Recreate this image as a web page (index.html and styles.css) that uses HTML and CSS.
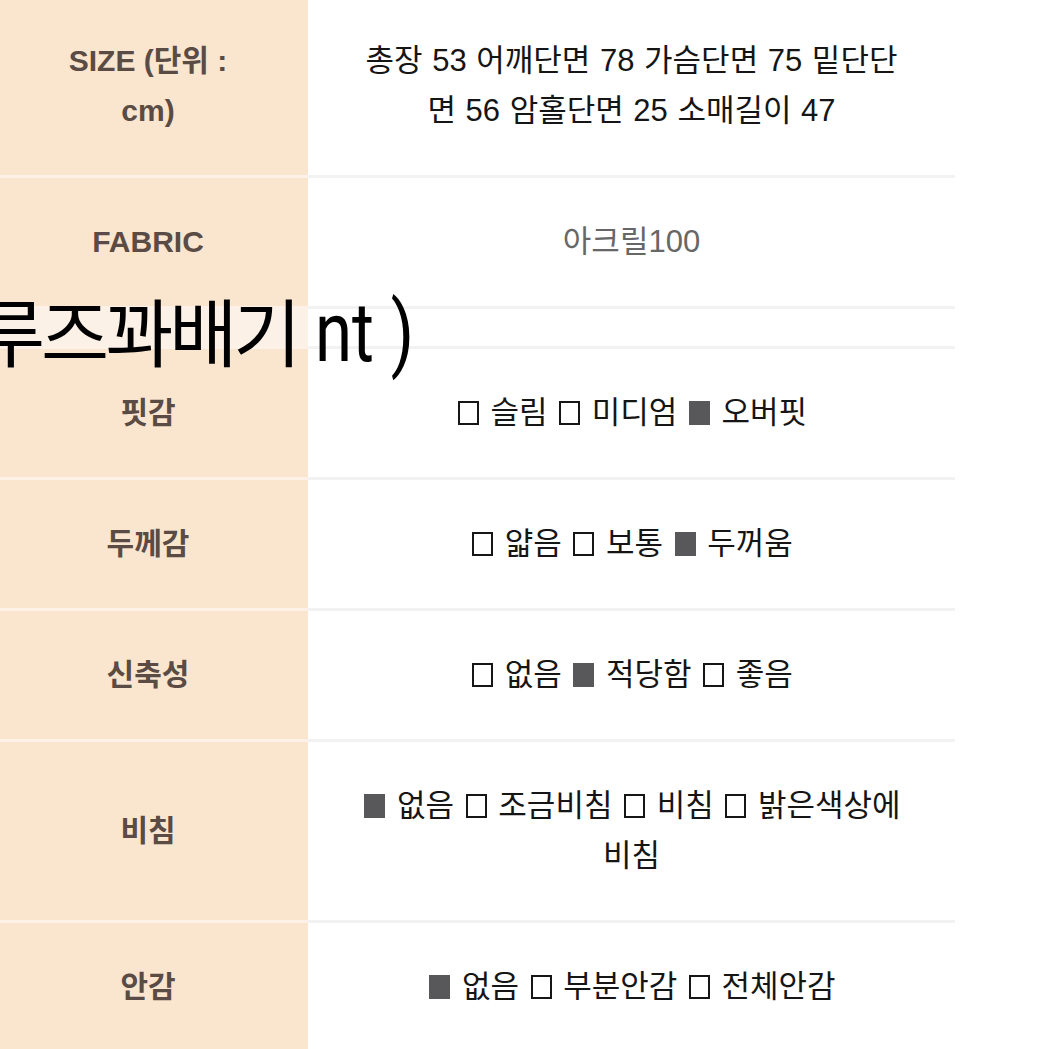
FILE: index.html
```html
<!DOCTYPE html>
<html lang="ko">
<head>
<meta charset="utf-8">
<title>상품 정보</title>
<link rel="stylesheet" href="styles.css">
</head>
<body>
<div class="spec">
  <div class="row">
    <div class="label"><p class="txt">SIZE (단위 : cm)</p></div>
    <div class="value"><p class="txt">총장 53 어깨단면 78 가슴단면 75 밑단단면 56 암홀단면 25 소매길이 47</p></div>
  </div>
  <div class="row">
    <div class="label"><p class="txt">FABRIC</p></div>
    <div class="value muted"><p class="txt">아크릴100</p></div>
  </div>
  <div class="row band">
    <div class="label band-cell"></div>
    <div class="value band-cell"></div>
    <div class="caption"><span class="cap-ko">루즈꽈배기</span> <span class="cap-en">nt )</span></div>
  </div>
  <div class="row">
    <div class="label"><p class="txt">핏감</p></div>
    <div class="value"><p class="txt"><span class="box"></span> 슬림 <span class="box"></span> 미디엄 <span class="box on"></span> 오버핏</p></div>
  </div>
  <div class="row">
    <div class="label"><p class="txt">두께감</p></div>
    <div class="value"><p class="txt"><span class="box"></span> 얇음 <span class="box"></span> 보통 <span class="box on"></span> 두꺼움</p></div>
  </div>
  <div class="row">
    <div class="label"><p class="txt">신축성</p></div>
    <div class="value"><p class="txt"><span class="box"></span> 없음 <span class="box on"></span> 적당함 <span class="box"></span> 좋음</p></div>
  </div>
  <div class="row">
    <div class="label"><p class="txt">비침</p></div>
    <div class="value"><p class="txt"><span class="box on"></span> 없음 <span class="box"></span> 조금비침 <span class="box"></span> 비침 <span class="box"></span> 밝은색상에 비침</p></div>
  </div>
  <div class="row">
    <div class="label"><p class="txt">안감</p></div>
    <div class="value"><p class="txt"><span class="box on"></span> 없음 <span class="box"></span> 부분안감 <span class="box"></span> 전체안감</p></div>
  </div>
</div>
</body>
</html>
```

FILE: styles.css
```css
* {
  box-sizing: border-box;
}

html,
body {
  margin: 0;
  background: #ffffff;
  overflow: hidden;
}

body {
  font-family: "Liberation Sans", "Noto Sans CJK KR", sans-serif;
}

.spec {
  width: 955px;
  margin-top: -3px;
}

.row {
  display: grid;
  grid-template-columns: 308px 647px;
  position: relative;
}

.label,
.value {
  display: flex;
  align-items: center;
  justify-content: center;
  text-align: center;
  line-height: 50px;
}

.txt {
  margin: 0;
}

.label {
  background: #fae5cf;
  border-bottom: 3px solid #fdf1e8;
  padding: 39px 62px 39px 50px;
  font-size: 30px;
  font-weight: 700;
  color: #5a4b45;
}

.value {
  background: #ffffff;
  border-bottom: 3px solid #f2f2f2;
  padding: 39px 47px;
  font-size: 31px;
  color: #151515;
  word-spacing: 1px;
}

.muted {
  color: #676767;
}

.box {
  display: inline-block;
  width: 21px;
  height: 24px;
  margin: 0 2px;
  border: 2px solid #161616;
  vertical-align: -2px;
}

.box.on {
  background: #58585a;
  border-color: #58585a;
}

.band-cell {
  padding: 0;
  height: 40px;
}

.band .label {
  background: #fcf1e6;
}

.caption {
  position: absolute;
  left: -23px;
  top: -18px;
  z-index: 1;
  white-space: nowrap;
  font-family: "Noto Sans CJK KR", sans-serif;
  font-size: 74px;
  line-height: 1;
  letter-spacing: -4px;
  color: #000000;
}

.cap-en {
  display: inline-block;
  margin-left: 1px;
  font-family: Roboto, sans-serif;
  font-size: 84px;
  line-height: 1;
  letter-spacing: 0;
  transform: scaleX(0.8);
  transform-origin: 0 50%;
}
```
